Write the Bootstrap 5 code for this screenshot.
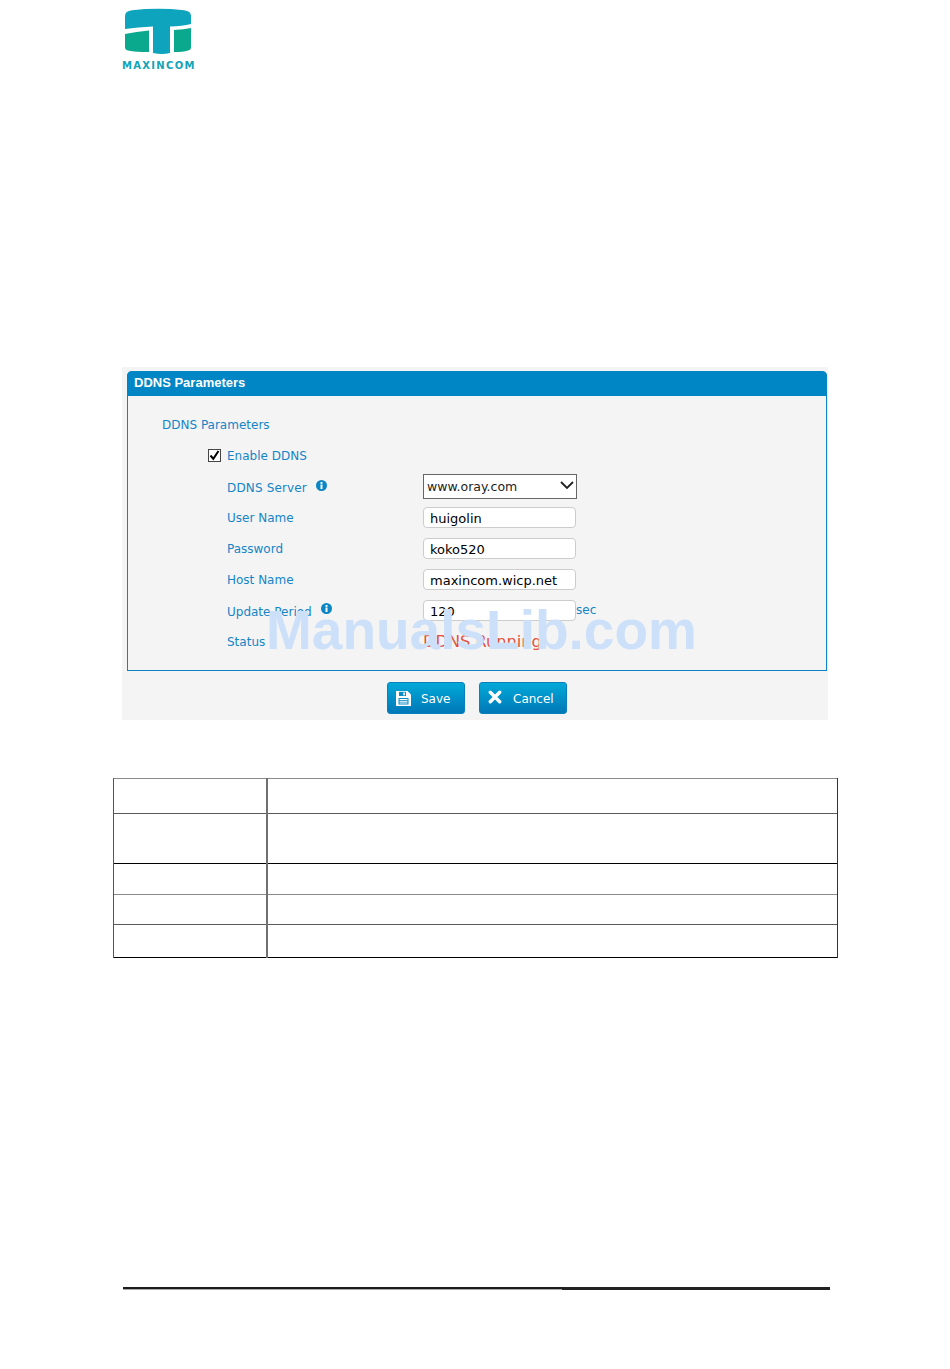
<!DOCTYPE html>
<html lang="en">
<head>
  <meta charset="UTF-8" />
  <title>DDNS Parameters</title>
  <link href="https://cdn.jsdelivr.net/npm/bootstrap@5.3.2/dist/css/bootstrap.min.css" rel="stylesheet" />
  <style>
    body { background: #fff; font-family: "DejaVu Sans", sans-serif; font-size: 12px; position: relative; height: 1369px; overflow: hidden; }
    .page-logo { padding: 8px 0 0 122px; height: 367px; }
    .logo-name { font-weight: 700; font-size: 10px; letter-spacing: 1.3px; color: #12a3b8; line-height: 11px; white-space: nowrap; }
    .shot { margin-left: 122px; width: 706px; height: 353px; background: #f4f4f4; padding: 4px 1px 0 5px; }
    .ddns-box { border: 1px solid #0a86c4; border-top: 0; height: 300px; border-radius: 5px 5px 0 0; }
    .ddns-head { background: #0085c5; color: #fff; font-family: "Liberation Sans", sans-serif; font-weight: 700; font-size: 13px; height: 25px; line-height: 23px; margin: 0 -1px; padding-left: 7px; border-radius: 5px 5px 0 0; }
    .ddns-title { color: #1585c8; padding: 21px 0 0 34px; line-height: 16px; height: 48px; }
    .ddns-row { display: flex; align-items: center; color: #1585c8; padding-left: 99px; }
    .row-enable { height: 22px; }
    .row-h21 { height: 21px; margin-top: 10px; }
    .ddns-label { width: 196px; display: flex; align-items: center; }
    .label-low { padding-top: 2px; }
    .label-wide { letter-spacing: .15px; }
    .ddns-check { margin-left: -19px; width: 13px; height: 13px; margin-right: 6px; border: 1px solid #444; background: #fff; display: flex; align-items: center; justify-content: center; }
    .tip { margin-left: 9px; margin-top: -4px; }
    .tip-near { margin-left: 9px; margin-top: -6px; }
    .ddns-field { width: 153px; height: 21px; border: 1px solid #ccc; border-radius: 4px; background: #fff; color: #000; font-size: 13px; line-height: 21px; padding-left: 6px; }
    .ddns-pick { width: 154px; height: 25px; border: 1px solid #666; background: #fff; color: #222; font-size: 12.5px; padding: 2px 2px 0 3px; display: flex; align-items: center; justify-content: space-between; }
    .pick-arrow { margin-top: -5px; }
    .unit { margin-top: -1px; margin-left: 0; }
    .status-text { color: #e4503a; font-size: 16.2px; padding-top: 2px; }
    .btn-bar { padding-top: 11px; gap: 14px; }
    .btn-ddns { background: linear-gradient(#00a9d8, #0078b8); color: #fff; border: 1px solid #0a80bb; border-radius: 3px; height: 32px; font-size: 12px; padding: 0; display: flex; align-items: center; }
    .btn-ddns:hover { color: #fff; }
    .btn-text { padding-top: 2px; }
    .btn-save { width: 78px; padding-left: 8px; gap: 10px; }
    .btn-cancel { width: 88px; padding-left: 8px; gap: 11px; }
    .btn-cancel svg { margin-top: -2px; }
    .sheet { margin: 58px 0 0 113px; width: 725px; border-collapse: collapse; }
    .sheet td { border-left: 1px solid #555; border-right: 1px solid #555; padding: 0; }
    .sheet td:first-child { width: 153px; border-right: 2px solid #707070; }
    .sheet td:last-child { border-left: 2px solid #707070; border-right-color: #333; }
    .sheet tr { border-top: 1px solid #8a8a8a; border-bottom: 1px solid #8a8a8a; }
    .sheet tr.line-dark { border-bottom-color: #000; }
    .sheet tr.line-mid { border-bottom-color: #5a5a5a; }
    .sr-35 { height: 35px; }
    .sr-50 { height: 50px; }
    .sr-31 { height: 31px; }
    .sr-30 { height: 30px; }
    .sr-33 { height: 33px; }
    .foot-rule { margin: 329px 0 0 123px; width: 707px; display: flex; }
    .foot-left { width: 439px; height: 3px; border-top: 2px solid #1c1c1c; border-bottom: 1px solid #aaa; }
    .foot-right { width: 268px; height: 3px; background: #222; }
    .wmark { position: absolute; left: 266px; top: 597px; font-family: "Liberation Sans", sans-serif; font-weight: 700; font-size: 55px; line-height: 66px; color: #cde0f9; white-space: nowrap; }
  </style>
</head>
<body>
  <div class="page-logo">
    <svg width="73" height="48" viewBox="0 0 73 48" class="d-block">
      <path d="M3 8 Q3 3 10 2.200 Q36 -0.500 62 2.200 Q69 3 69 8 V16 Q60 18 48 18.500 V45 Q40 47 31 45 V18.500 Q16 19 3 21 Z" fill="#0ea4bd"/>
      <path d="M3 26 Q14 23.500 27 22.500 V44 Q14 44 6 42.500 Q3 42 3 39 Z" fill="#0aa88c"/>
      <path d="M69 20 Q62 21.500 52 22 V44 Q61 44 66 42.500 Q69 42 69 39 Z" fill="#0aa88c"/>
    </svg>
    <div class="logo-name mt-1">MAXINCOM</div>
  </div>

  <div class="shot">
    <div class="ddns-box">
      <div class="ddns-head">DDNS Parameters</div>
      <div class="ddns-title">DDNS Parameters</div>
      <div class="ddns-row row-enable">
        <span class="ddns-check">
          <svg width="11" height="11" viewBox="0 0 11 11"><path d="M1.500 5.500 L4.300 8.800 L9.500 1" fill="none" stroke="#000" stroke-width="2"/></svg>
        </span>
        <span class="label-low">Enable DDNS</span>
      </div>
      <div class="ddns-row mt-2">
        <div class="ddns-label label-low label-wide">DDNS Server
          <svg class="tip" width="11" height="11" viewBox="0 0 11 11"><circle cx="5.500" cy="5.500" r="5.500" fill="#0a86c4"/><rect x="4.500" y="2" width="2" height="1.800" fill="#fff"/><rect x="4.500" y="4.500" width="2" height="4.500" fill="#fff"/></svg>
        </div>
        <div class="ddns-pick">www.oray.com
          <svg class="pick-arrow" width="14" height="8" viewBox="0 0 14 8"><path d="M1 1 L7 7 L13 1" fill="none" stroke="#222" stroke-width="1.800"/></svg>
        </div>
      </div>
      <div class="ddns-row row-h21 mt-2">
        <div class="ddns-label">User Name</div>
        <div class="ddns-field">huigolin</div>
      </div>
      <div class="ddns-row row-h21">
        <div class="ddns-label">Password</div>
        <div class="ddns-field">koko520</div>
      </div>
      <div class="ddns-row row-h21">
        <div class="ddns-label">Host Name</div>
        <div class="ddns-field">maxincom.wicp.net</div>
      </div>
      <div class="ddns-row row-h21">
        <div class="ddns-label label-low">Update Period
          <svg class="tip-near" width="11" height="11" viewBox="0 0 11 11"><circle cx="5.500" cy="5.500" r="5.500" fill="#0a86c4"/><rect x="4.500" y="2" width="2" height="1.800" fill="#fff"/><rect x="4.500" y="4.500" width="2" height="4.500" fill="#fff"/></svg>
        </div>
        <div class="ddns-field">120</div>
        <span class="unit">sec</span>
      </div>
      <div class="ddns-row row-h21">
        <div class="ddns-label">Status</div>
        <div class="status-text">DDNS Running</div>
      </div>
    </div>
    <div class="d-flex justify-content-center btn-bar">
      <button type="button" class="btn btn-ddns btn-save">
        <svg width="15" height="15" viewBox="0 0 15 15"><path d="M0 0 H11.500 L15 3.500 V15 H0 Z" fill="#fff"/><rect x="3" y="0.800" width="7" height="4.200" fill="#0a8cc6"/><rect x="7.300" y="1.500" width="1.600" height="2.800" fill="#fff"/><rect x="2.500" y="7" width="10" height="6.500" fill="#0a8cc6"/><path d="M3.500 8.500 H11.500 M3.500 10.300 H11.500 M3.500 12 H11.500" stroke="#fff" stroke-width="1"/></svg>
        <span class="btn-text">Save</span>
      </button>
      <button type="button" class="btn btn-ddns btn-cancel">
        <svg width="14" height="14" viewBox="0 0 14 14"><path d="M2.300 2.300 L11.700 11.700 M11.700 2.300 L2.300 11.700" stroke="#fff" stroke-width="3.400" stroke-linecap="round"/></svg>
        <span class="btn-text">Cancel</span>
      </button>
    </div>
  </div>

  <table class="sheet">
    <tr class="sr-35 line-mid"><td></td><td></td></tr>
    <tr class="sr-50 line-dark"><td></td><td></td></tr>
    <tr class="sr-31"><td></td><td></td></tr>
    <tr class="sr-30 line-mid"><td></td><td></td></tr>
    <tr class="sr-33 line-dark"><td></td><td></td></tr>
  </table>

  <div class="foot-rule"><div class="foot-left"></div><div class="foot-right"></div></div>

  <div class="wmark">ManualsLib.com</div>
</body>
</html>
